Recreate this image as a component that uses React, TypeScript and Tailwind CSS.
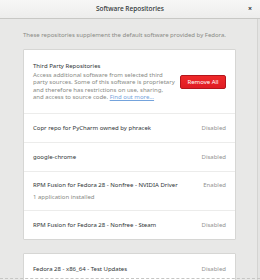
import React from "react";

type Repo = { name: string; status: string; sub?: string };

const REPOS: Repo[] = [
  { name: "Copr repo for PyCharm owned by phracek", status: "Disabled" },
  { name: "google-chrome", status: "Disabled" },
  { name: "RPM Fusion for Fedora 28 - Nonfree - NVIDIA Driver", status: "Enabled", sub: "1 application installed" },
  { name: "RPM Fusion for Fedora 28 - Nonfree - Steam", status: "Disabled" },
];

function RepoRow({ repo }: { repo: Repo }) {
  return (
    <div
      className={
        "flex flex-col justify-center px-[9px] border-t border-[#ececeb] first:border-t-0 " +
        (repo.sub ? "h-[39px]" : "h-[29px]")
      }
    >
      <div className="flex items-center justify-between">
        <span className="text-[6px] leading-[8px] text-[#2e3436]">{repo.name}</span>
        <span className="text-[6px] leading-[8px] text-[#929292]">{repo.status}</span>
      </div>
      {repo.sub && <span className="text-[6px] leading-[8px] text-[#888a85] mt-[4px]">{repo.sub}</span>}
    </div>
  );
}

export default function App() {
  return (
    <div className="w-[260px] h-[280px] bg-[#e8e8e7] overflow-hidden flex flex-col relative" style={{ fontFamily: '"Noto Sans", "Open Sans", sans-serif' }}>
      {/* Header */}
      <div className="h-[19px] shrink-0 bg-gradient-to-b from-[#f7f7f6] to-[#ededec] border-b border-[#c8c8c5] flex items-center justify-center relative">
        <span className="text-[6.5px] font-medium text-[#2e3436]">Software Repositories</span>
        <span className="absolute right-[8px] top-[5px] text-[7px] leading-[8px] font-bold text-[#2e3436]">×</span>
      </div>

      <div className="flex flex-1 min-h-0">
        <div className="flex-1 pl-[23px] pr-[21px] pt-[12px]">
          <p className="text-[6px] leading-[8px] text-[#888a85]">These repositories supplement the default software provided by Fedora.</p>

          <div className="mt-[10px] bg-white border border-[#d6d6d4] rounded-[1px]">
            {/* Third party */}
            <div className="flex items-center justify-between px-[9px] h-[63px]">
              <div className="w-[142px]">
                <div className="text-[6px] leading-[8px] text-[#2e3436]">Third Party Repositories</div>
                <p className="mt-[2px] text-[6px] leading-[7.5px] text-[#888a85]">
                  Access additional software from selected third party sources. Some of this software is proprietary and therefore has restrictions on use, sharing, and access to source code.{" "}
                  <span className="text-[#74a3dc] underline">Find out more…</span>
                </p>
              </div>
              <button className="w-[46px] h-[14px] rounded-[2px] bg-gradient-to-b from-[#ef2929] to-[#e01b24] border border-[#b3151c] text-white text-[6px] leading-[8px]">
                Remove All
              </button>
            </div>
            {REPOS.map((r) => (
              <RepoRow key={r.name} repo={r} />
            ))}
          </div>

          <div className="mt-[13px] bg-white border border-[#d6d6d4] rounded-[1px]">
            <RepoRow repo={{ name: "Fedora 28 - x86_64 - Test Updates", status: "Disabled" }} />
          </div>
        </div>
        {/* scrollbar track */}
        <div className="w-[3px] border-l border-[#d4d4d2] bg-[#e4e4e3]" />
      </div>
      <div className="absolute left-0 top-[278px] w-[260px] border-t border-dashed border-[#c6c6c4]" />
    </div>
  );
}
